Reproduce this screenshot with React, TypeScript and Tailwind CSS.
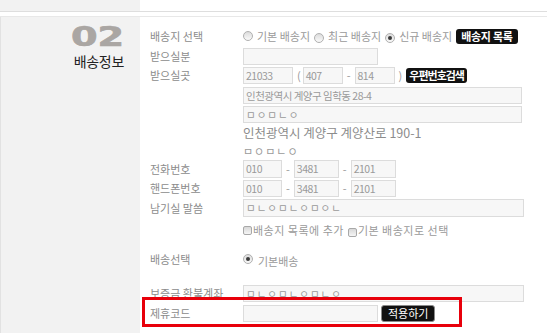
const KR = "font-['Noto_Sans_CJK_KR','Noto_Sans',sans-serif]";

function Radio({ checked = false }: { checked?: boolean }) {
  return (
    <span className="relative inline-block w-[10px] h-[10px] shrink-0 rounded-full border border-[#b0b0b0] bg-linear-to-b from-[#dcdcdc] to-[#fafafa]">
      {checked && <span className="absolute left-[2px] top-[2px] w-[4px] h-[4px] rounded-full bg-[#3a3a3a]" />}
    </span>
  );
}

function Check() {
  return <span className="inline-block w-[9px] h-[9px] shrink-0 rounded-[2px] border border-[#a8a8a8] bg-linear-to-b from-[#d8d8d8] to-[#f6f6f6]" />;
}

function Box({ className = "", children }: { className?: string; children?: React.ReactNode }) {
  return (
    <div className={`flex items-center h-full border border-[#dcdcdc] bg-[#f7f7f7] px-[2px] text-[10.5px] tracking-[-0.5px] text-[#9a9a9a] whitespace-nowrap ${className}`}>
      {children}
    </div>
  );
}

function Btn({ children, className = "" }: { children: React.ReactNode; className?: string }) {
  return (
    <span className={`flex items-center h-[15px] rounded-[3px] bg-[#111] text-white text-[11px] whitespace-nowrap ${className}`}>
      {children}
    </span>
  );
}

function Row({ label = "", className = "", children }: { label?: string; className?: string; children?: React.ReactNode }) {
  return (
    <div className={`flex items-center ${className}`}>
      <div className="w-[93px] shrink-0 text-[11px] text-[#8c8c8c] whitespace-nowrap">{label}</div>
      <div className="flex items-center h-full">{children}</div>
    </div>
  );
}

const opt = "text-[11px] text-[#9a9a9a] whitespace-nowrap";

export default function App() {
  return (
    <div className={`relative w-[547px] h-[333px] overflow-hidden bg-white ${KR}`}>
      <div className="flex h-[11px]">
        <div className="w-[140px] bg-[#f2f2f2]" />
      </div>
      <div className="h-px bg-[#dedede]" />
      <div className="h-[4px]" />
      <div className="h-px bg-[#e8e8e8]" />

      <div className="flex h-[316px]">
        {/* section title */}
        <div className="w-[140px] shrink-0 bg-[#f2f2f2] border-l border-[#e2e2e2] flex flex-col items-end pr-[16px] pt-[7px]">
          <div className="h-[26px] leading-none text-[26px] font-bold text-[#aaa6a3] [-webkit-text-stroke:0.7px_#aaa6a3] font-['DejaVu_Sans',sans-serif] scale-x-[1.47] origin-right">02</div>
          <div className="mt-[4px] h-[14px] leading-[14px] text-[14px] tracking-[-0.3px] text-[#222]">배송정보</div>
        </div>

        {/* form */}
        <div className="flex-1 flex flex-col pl-[10px] pt-[10px]">
          <Row label="배송지 선택" className="h-[18px]">
            <Radio />
            <span className={`ml-[4px] ${opt}`}>기본 배송지</span>
            <span className="ml-[4px]"><Radio /></span>
            <span className={`ml-[4px] ${opt}`}>최근 배송지</span>
            <span className="ml-[4px]"><Radio checked /></span>
            <span className={`ml-[4px] ${opt}`}>신규 배송지</span>
            <Btn className="ml-[4px] px-[5px] font-bold tracking-[-0.3px]">배송지 목록</Btn>
          </Row>
          <Row label="받으실분" className="mt-[3px] h-[17px]">
            <Box className="w-[135px]" />
          </Row>
          <Row label="받으실곳" className="mt-[2px] h-[17px]">
            <Box className="w-[50px]">21033</Box>
            <span className={`ml-[4px] mr-[2px] ${opt}`}>(</span>
            <Box className="w-[40px]">407</Box>
            <span className={`mx-[4px] ${opt}`}>-</span>
            <Box className="w-[40px]">814</Box>
            <span className={`ml-[4px] ${opt}`}>)</span>
            <Btn className="ml-[4px] px-[3px] rounded-[2px] font-bold tracking-[-1px]">우편번호검색</Btn>
          </Row>
          <Row className="mt-[3px] h-[17px]">
            <Box className="w-[279px]">인천광역시 계양구 임학동 28-4</Box>
          </Row>
          <Row className="mt-[2px] h-[17px]">
            <Box className="w-[279px] tracking-[1px]">ㅁㅇㅁㄴㅇ</Box>
          </Row>
          <Row className="h-[20px]">
            <span className="text-[12.5px] text-[#8c8c8c] whitespace-nowrap">인천광역시 계양구 계양산로 190-1</span>
          </Row>
          <Row className="h-[17px]">
            <span className={`${opt} tracking-[1px]`}>ㅁㅇㅁㄴㅇ</span>
          </Row>
          <Row label="전화번호" className="h-[18px]">
            <Box className="w-[39px]">010</Box>
            <span className={`mx-[4px] ${opt}`}>-</span>
            <Box className="w-[45px]">3481</Box>
            <span className={`mx-[4px] ${opt}`}>-</span>
            <Box className="w-[45px]">2101</Box>
          </Row>
          <Row label="핸드폰번호" className="mt-[2px] h-[17px]">
            <Box className="w-[39px]">010</Box>
            <span className={`mx-[4px] ${opt}`}>-</span>
            <Box className="w-[45px]">3481</Box>
            <span className={`mx-[4px] ${opt}`}>-</span>
            <Box className="w-[45px]">2101</Box>
          </Row>
          <Row label="남기실 말씀" className="mt-[2px] h-[18px]">
            <Box className="w-[281px] tracking-[1px]">ㅁㄴㅇㅁㄴㅇㅁㅇㄴ</Box>
          </Row>
          <Row className="mt-[2px] h-[22px]">
            <Check />
            <span className={`ml-[1px] tracking-[0.5px] ${opt}`}>배송지 목록에 추가</span>
            <span className="ml-[4px]"><Check /></span>
            <span className={`ml-[1px] tracking-[0.5px] ${opt}`}>기본 배송지로 선택</span>
          </Row>
          <Row label="배송선택" className="mt-[8px] h-[20px]">
            <Radio checked />
            <span className={`ml-[5px] mt-[4px] ${opt}`}>기본배송</span>
          </Row>
          <Row label="보증금 환불계좌" className="mt-[16px] h-[17px]">
            <Box className="w-[281px] tracking-[1px]">ㅁㄴㅇㅁㄴㅇㅁㄴㅇ</Box>
          </Row>
          <Row label="제휴코드" className="mt-[3px] h-[17px]">
            <Box className="w-[135px]" />
            <Btn className="ml-[3px] h-[17px] rounded-[2px] border border-[#8a8a8a] px-[6px]">적용하기</Btn>
          </Row>
        </div>
      </div>

      {/* highlight annotation */}
      <div className="absolute left-[142px] top-[297px] w-[320px] h-[30px] border-[3px] border-[#e8000b]" />
    </div>
  );
}
